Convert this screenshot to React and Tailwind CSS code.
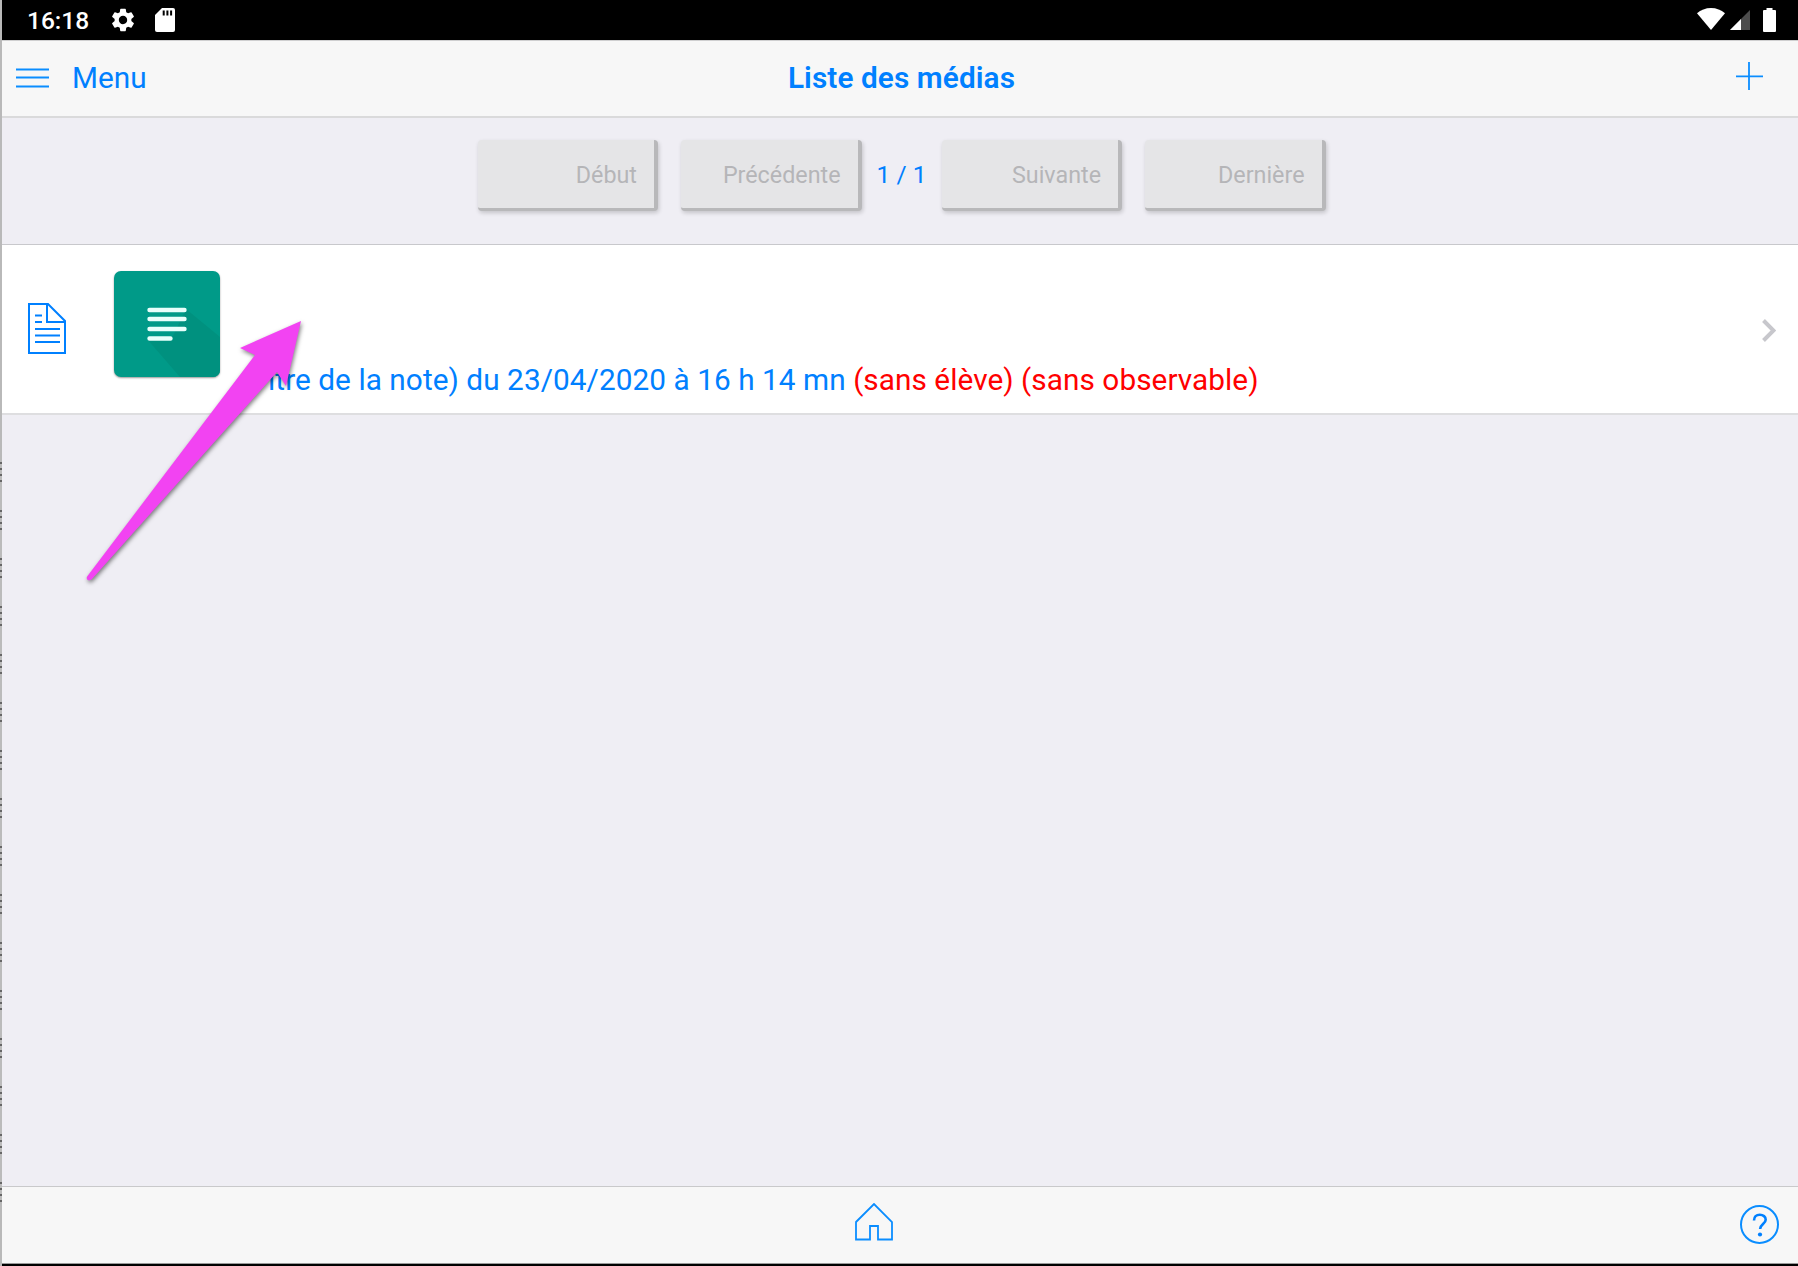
import React from "react";

function StatusBar() {
  return (
    <div className="flex h-10 shrink-0 items-center bg-black text-white">
      <span className="mt-px ml-[25px] w-[82px] text-[24.5px] leading-10 font-medium">16:18</span>
      <svg className="-mt-px h-7 w-7 shrink-0" viewBox="0 0 24 24" fill="currentColor">
        <path d="M19.14 12.94c.04-.3.06-.61.06-.94 0-.32-.02-.64-.07-.94l2.03-1.58a.49.49 0 0 0 .12-.61l-1.92-3.32a.49.49 0 0 0-.59-.22l-2.39.96a7.03 7.03 0 0 0-1.62-.94l-.36-2.54a.48.48 0 0 0-.48-.41h-3.84a.47.47 0 0 0-.47.41l-.36 2.54c-.59.24-1.13.57-1.62.94l-2.39-.96a.47.47 0 0 0-.59.22L2.74 8.87a.46.46 0 0 0 .12.61l2.03 1.58c-.05.3-.09.63-.09.94s.02.64.07.94l-2.03 1.58a.49.49 0 0 0-.12.61l1.92 3.32c.12.22.37.29.59.22l2.39-.96c.5.38 1.03.7 1.62.94l.36 2.54c.05.24.24.41.48.41h3.84c.24 0 .44-.17.47-.41l.36-2.54a6.8 6.8 0 0 0 1.62-.94l2.39.96c.22.08.47 0 .59-.22l1.92-3.32a.47.47 0 0 0-.12-.61zM12 15.6A3.61 3.61 0 0 1 8.400 12c0-1.980 1.620-3.600 3.600-3.600s3.600 1.620 3.600 3.600-1.620 3.600-3.600 3.600z" />
      </svg>
      <svg className="-mt-px ml-[18px] h-6 w-5 shrink-0" viewBox="0 0 20 24">
        <path d="M7 0h11a2 2 0 0 1 2 2v20a2 2 0 0 1-2 2H2a2 2 0 0 1-2-2V7z" fill="#fff" />
        <path d="M7.700 2.500h2v5h-2zM11.400 2.500h2v5h-2zM15.100 2.500h2v5h-2z" fill="#000" />
      </svg>
      <div className="-mt-0.5 mr-[22px] ml-auto flex items-center gap-[5px]">
        <svg className="h-[22px] w-[28px]" viewBox="0 0 28 22">
          <path d="M0 5.200C3.800 2 8.600 0 14 0s10.200 2 14 5.200L14 22z" fill="#fff" />
        </svg>
        <svg className="mt-0.5 h-5 w-5" viewBox="0 0 20 20">
          <path d="M0 20L20 0v20z" fill="#4d4d4d" />
          <path d="M0 20L11 9v11z" fill="#fff" />
        </svg>
        <svg className="mt-px ml-2 h-6 w-[13px]" viewBox="0 0 13 24">
          <path d="M3.500 0h6v2H12a1 1 0 0 1 1 1v20a1 1 0 0 1-1 1H1a1 1 0 0 1-1-1V3a1 1 0 0 1 1-1h2.500z" fill="#fff" />
        </svg>
      </div>
    </div>
  );
}

function Header() {
  return (
    <header className="grid h-[78px] shrink-0 grid-cols-[1fr_auto_1fr] items-center border-t border-b-2 border-t-[#cfcfd0] border-b-[#dadadb] bg-[#f7f7f7] pb-0.5">
      <div className="flex items-center">
        <svg className="ml-[14px] h-5 w-[33px]" viewBox="0 0 33 20" stroke="#0a8dff" strokeWidth="1.800">
          <path d="M0 1.500h33M0 9.500h33M0 18.500h33" />
        </svg>
        <span className="ml-[23px] text-[29.75px] leading-10">Menu</span>
      </div>
      <h1 className="pl-[3px] text-[29.75px] leading-10 font-semibold tracking-[0.1px]">Liste des médias</h1>
      <svg className="-mt-1 mr-[35px] h-7 w-[27px] justify-self-end" viewBox="0 0 27 28" stroke="#0a8dff" strokeWidth="1.800">
        <path d="M13 0v28M0 14.300h27" />
      </svg>
    </header>
  );
}

function PagerButton({ children }) {
  return (
    <button
      disabled
      className="h-[71px] w-[180.5px] rounded-[4px] border-r-4 border-b-[3px] border-[#b8b8ba] bg-[#e5e5e7] pt-0.5 pr-[17px] text-right text-[23.3px] text-[#b5b5b8] shadow-[1px_2px_4px_rgba(0,0,0,0.18)]"
    >
      {children}
    </button>
  );
}

function Pager() {
  return (
    <nav className="flex h-[126px] shrink-0 items-start justify-center pt-[22px] pl-[3px]">
      <PagerButton>Début</PagerButton>
      <div className="w-[23px]" />
      <PagerButton>Précédente</PagerButton>
      <span className="w-20 text-center text-[24.5px] leading-[70px]">1 / 1</span>
      <PagerButton>Suivante</PagerButton>
      <div className="w-[23px]" />
      <PagerButton>Dernière</PagerButton>
    </nav>
  );
}

function DocumentIcon() {
  return (
    <svg className="mt-[58px] ml-[26px] h-[51px] w-[38px] shrink-0" viewBox="0 0 38 51" fill="none" stroke="#0080ff" strokeWidth="2">
      <path d="M1 1h19l17 17v32H1zM19 1v18h18" />
      <path d="M7 12.500h7M7 19h7M7 26h25M7 32.500h25M7 39h25" />
    </svg>
  );
}

function NoteThumbnail() {
  return (
    <div className="mt-[26px] ml-[47.5px] h-[106px] w-[106px] shrink-0 overflow-hidden rounded-[7px] bg-[#009a88] shadow-[0_1px_2px_rgba(0,0,0,0.4)]">
      <svg className="h-full w-full" viewBox="0 0 106 106">
        <path d="M72 38l34 28v40H66L33 68l26-3z" fill="#00917f" />
        <g stroke="#e8fffb" strokeWidth="4.400" strokeLinecap="round">
          <path d="M35.500 39h35M35.500 48h35M35.500 58h35M35.500 67.500h21" />
        </g>
      </svg>
    </div>
  );
}

function PointerArrow() {
  return (
    <svg className="pointer-events-none absolute top-[72px] left-[78px] h-[275px] w-[232px] drop-shadow-[1px_2px_2px_rgba(0,0,0,0.5)]" viewBox="80 317 232 275">
      <path d="M301 321L286 386L277 372L92 579C89 582 85 579 87.500 576L255 355L240 348Z" fill="#f243f2" />
    </svg>
  );
}

function MediaRow() {
  return (
    <section className="relative flex h-[171px] shrink-0 items-start border-t border-b-2 border-t-[#c8c8cc] border-b-[#dedee0] bg-white">
      <DocumentIcon />
      <NoteThumbnail />
      <p className="mt-[115px] ml-[20.5px] text-[29.75px] leading-10 tracking-[0.06px] whitespace-nowrap">
        (Titre de la note) du 23/04/2020 à 16 h 14 mn{" "}
        <span className="text-[#ff0000]">(sans élève) (sans observable)</span>
      </p>
      <svg className="mt-[74px] mr-[22px] ml-auto h-[23px] w-[14px] shrink-0" viewBox="0 0 14 23" fill="none" stroke="#c7c7cc" strokeWidth="4">
        <path d="M1.500 1.500L11.500 11.500L1.500 21.500" />
      </svg>
      <PointerArrow />
    </section>
  );
}

function Footer() {
  return (
    <footer className="flex h-[78px] shrink-0 items-start border-t border-b border-t-[#c9c9cb] border-b-[#999] bg-[#f7f7f7]">
      <svg className="mt-4 ml-[852.5px] h-[38px] w-[38px]" viewBox="0 0 38 38" fill="none" stroke="#0a8dff" strokeWidth="1.800">
        <path d="M1 19L19 1L37 19V36.500H23V23H15V36.500H1Z" />
      </svg>
      <div className="mt-[18px] mr-[19px] ml-auto flex h-[39px] w-[39px] items-center justify-center rounded-full border-2 border-[#0a8dff]">
        <svg className="h-6 w-4" viewBox="0 0 16 24" fill="none">
          <path d="M2 7.500C2 3.800 4.300 1.800 7.800 1.800c3.400 0 5.900 1.900 5.900 4.900 0 4-5.600 4.800-5.600 9.300" stroke="#0080ff" strokeWidth="2.600" />
          <circle cx="8" cy="21.500" r="2.100" fill="#0080ff" />
        </svg>
      </div>
    </footer>
  );
}

export default function App() {
  return (
    <div className="flex h-[1266px] w-[1798px] overflow-hidden bg-[#efeef4] font-[Roboto,sans-serif] text-[#0080ff]">
      <aside className="flex w-0.5 shrink-0 flex-col bg-[#b9b9b9]">
        <div className="h-[462px]" />
        <div className="h-[740px] bg-[repeating-linear-gradient(to_bottom,#666_0_2px,#bbb_2px_6px,#666_6px_8px,#bbb_8px_12px,#666_12px_14px,#bbb_14px_18px,#666_18px_20px,#bbb_20px_48px)]" />
      </aside>
      <div className="flex min-w-0 flex-1 flex-col">
        <StatusBar />
        <Header />
        <Pager />
        <MediaRow />
        <main className="flex-1" />
        <Footer />
        <div className="h-0.5 shrink-0 bg-black" />
      </div>
    </div>
  );
}
